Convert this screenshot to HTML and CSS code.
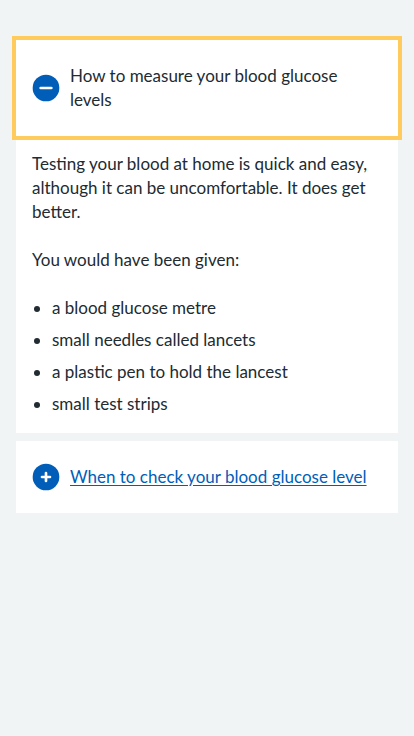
FILE: index.html
```html
<!DOCTYPE html>
<html lang="en">
<head>
<meta charset="utf-8">
<title>Blood glucose</title>
<link rel="stylesheet" href="styles.css">
</head>
<body>
<main class="page">
  <details class="expander" open>
    <summary class="expander-summary is-focused">
      <svg class="icon" viewBox="0 0 24 24" width="32" height="32" aria-hidden="true">
        <circle cx="12" cy="12" r="10" fill="#005eb8"/>
        <path fill="#fff" d="M8 11h8a1 1 0 0 1 0 2H8a1 1 0 0 1 0-2z"/>
      </svg>
      <span class="summary-text">How to measure your blood glucose levels</span>
    </summary>
    <div class="expander-body">
      <p>Testing your blood at home is quick and easy, although it can be uncomfortable. It does get better.</p>
      <p>You would have been given:</p>
      <ul class="list">
        <li>a blood glucose metre</li>
        <li>small needles called lancets</li>
        <li>a plastic pen to hold the lancest</li>
        <li>small test strips</li>
      </ul>
    </div>
  </details>
  <details class="expander">
    <summary class="expander-summary">
      <svg class="icon" viewBox="0 0 24 24" width="32" height="32" aria-hidden="true">
        <circle cx="12" cy="12" r="10" fill="#005eb8"/>
        <path fill="#fff" d="M12 8a1 1 0 0 1 1 1v2h2a1 1 0 0 1 0 2h-2v2a1 1 0 0 1-2 0v-2H9a1 1 0 0 1 0-2h2V9a1 1 0 0 1 1-1z"/>
      </svg>
      <span class="summary-text link">When to check your blood glucose level</span>
    </summary>
  </details>
</main>
</body>
</html>
```
FILE: styles.css
```css
html, body {
  margin: 0;
  padding: 0;
  background: #f0f4f5;
}
body {
  font-family: Lato, "Noto Sans", sans-serif;
  font-size: 17px;
  line-height: 24px;
  color: #212b32;
}
.page {
  padding: 40px 16px 0;
  display: flex;
  flex-direction: column;
  gap: 8px;
}
.expander {
  background: #fff;
}
.expander-summary {
  list-style: none;
  display: flex;
  align-items: center;
  gap: 8px;
  padding: 24px 16px;
  cursor: pointer;
}
.expander-summary::-webkit-details-marker {
  display: none;
}
.is-focused {
  outline: 4px solid #ffcb5c;
  outline-offset: 0;
}
.icon {
  flex: none;
  margin: -4px 0 -4px -2px;
  display: block;
}
.summary-text {
  padding-right: 8px;
}
.link {
  color: #005eb8;
  text-decoration: underline;
  text-underline-offset: 2px;
}
.expander-body {
  padding: 16px 16px 17px;
}
.expander-body p {
  margin: 0 0 24px;
}
.list {
  margin: 0;
  padding: 0 0 0 20px;
  list-style: disc;
}
.list li {
  margin-bottom: 8px;
}
.list li:last-child {
  margin-bottom: 0;
}
```
